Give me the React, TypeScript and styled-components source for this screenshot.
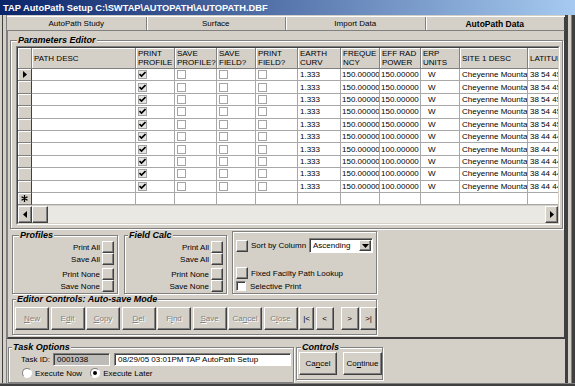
import styled, { createGlobalStyle, css } from "styled-components";

const FACE = "#d4d0c8";
const SHADOW = "#808080";
const DARK = "#404040";
const GRIDLINE = "#a8a8a8";

const COLS = "14px 104px 39px 42px 39px 42px 43px 39px 41px 39px 68px 60px";

const GlobalStyle = createGlobalStyle`
  * { box-sizing: border-box; }
  html, body { margin: 0; padding: 0; background: ${FACE}; }
  body {
    font-family: "Liberation Sans", Arial, sans-serif;
    font-size: 8px;
    color: #000;
  }
  button { font: inherit; color: inherit; }
`;

const raised = css`
  background: ${FACE};
  border: 1px solid;
  border-color: #fff ${DARK} ${DARK} #fff;
  box-shadow: inset -1px -1px ${SHADOW};
`;

const sunken = css`
  border: 1px solid;
  border-color: ${SHADOW} #fff #fff ${SHADOW};
  box-shadow: inset 1px 1px ${DARK};
`;

const Window = styled.div`
  width: 575px;
  height: 386px;
  display: flex;
  flex-direction: column;
  background: ${FACE};
  overflow: hidden;
`;

const TitleBar = styled.div`
  flex: none;
  height: 15px;
  display: flex;
  align-items: center;
  padding-left: 3px;
  background: linear-gradient(to right, #0a246a, #a6caf0);
  color: #fff;
  font-weight: bold;
  font-size: 9.3px;
  white-space: nowrap;
`;

const Frame = styled.div`
  flex: 1;
  display: flex;
  min-height: 0;
`;

const SideEdge = styled.div<{ $side: "left" | "right" }>`
  flex: none;
  width: ${(p) => (p.$side === "left" ? 7 : 10)}px;
  background: ${(p) =>
    p.$side === "left"
      ? `linear-gradient(to right, ${FACE} 0 2px, ${DARK} 2px 3px, ${FACE} 3px 6px, ${SHADOW} 6px 7px)`
      : `linear-gradient(to right, ${DARK} 0 3px, ${FACE} 3px 6px, ${SHADOW} 6px 7px, ${DARK} 7px 10px)`};
`;

const BottomEdge = styled.div`
  flex: none;
  height: 3px;
  background: linear-gradient(to bottom, ${SHADOW} 0 1px, ${DARK} 1px 3px);
`;

const Client = styled.div`
  flex: 1;
  min-width: 0;
  display: flex;
  flex-direction: column;
`;

const TabStrip = styled.div`
  flex: none;
  height: 14px;
  margin-top: 1px;
  display: flex;
  border-top: 1px solid #fff;
`;

const Tab = styled.div<{ $active?: boolean }>`
  flex: 1;
  display: flex;
  align-items: center;
  justify-content: center;
  font-size: ${(p) => (p.$active ? "8.5px" : "8px")};
  font-weight: ${(p) => (p.$active ? "bold" : "normal")};
  border-right: 1px solid ${(p) => (p.$active ? DARK : SHADOW)};
  box-shadow: ${(p) => (p.$active ? "inset 1px 0 #fff" : "1px 0 #fff")};
`;

const TabPage = styled.div`
  flex: none;
  height: 309px;
  display: flex;
  flex-direction: column;
  border-top: 1px solid ${SHADOW};
  border-left: 1px solid ${SHADOW};
  border-right: 1px solid ${DARK};
  border-bottom: 2px solid ${DARK};
  padding-top: 5px;
`;

const Group = styled.fieldset`
  margin: 0;
  min-width: 0;
  border: 1px solid ${SHADOW};
  box-shadow: inset 1px 1px #fff, 1px 1px #fff;
`;

const Caption = styled.legend<{ $indent?: number }>`
  padding: 0 1px;
  margin-left: ${(p) => p.$indent ?? 0}px;
  height: 9px;
  font-size: 9px;
  line-height: 9px;
  font-weight: bold;
  font-style: italic;
  background: ${FACE};
  white-space: nowrap;
`;

const ParamGroup = styled(Group)`
  margin: 0 1px 0 2px;
  padding: 0 2px 3px 5px;
`;

const GridBox = styled.div`
  margin-top: 1px;
  height: 179px;
  display: flex;
  border: 1px solid;
  border-color: ${SHADOW} #fff #fff ${SHADOW};
`;

const GridInner = styled.div`
  flex: 1;
  min-width: 0;
  display: flex;
  flex-direction: column;
  overflow: hidden;
  border: 1px solid;
  border-color: ${DARK} ${FACE} ${FACE} ${DARK};
  background: ${FACE};
`;

const GridRow = styled.div<{ $h: number }>`
  flex: none;
  display: grid;
  grid-template-columns: ${COLS};
  height: ${(p) => p.$h}px;
`;

const HeadCell = styled.div`
  display: flex;
  align-items: center;
  padding: 0 2px;
  background: ${FACE};
  border-right: 1px solid ${SHADOW};
  border-bottom: 1px solid ${SHADOW};
  box-shadow: inset 1px 1px #fff;
  white-space: pre;
  line-height: 9px;
  overflow: hidden;
`;

const RowHead = styled.div`
  display: flex;
  align-items: center;
  justify-content: center;
  background: ${FACE};
  border-right: 1px solid ${DARK};
  border-bottom: 1px solid ${SHADOW};
  box-shadow: inset 1px 1px #fff;
`;

const Cell = styled.div<{ $indent?: number }>`
  display: flex;
  align-items: center;
  padding-left: ${(p) => p.$indent ?? 2}px;
  background: #fff;
  border-right: 1px solid ${GRIDLINE};
  border-bottom: 1px solid ${GRIDLINE};
  white-space: nowrap;
  overflow: hidden;
`;

const CheckBox = styled.span<{ $on?: boolean }>`
  width: 9px;
  height: 9px;
  display: flex;
  align-items: center;
  justify-content: center;
  border: 1px solid #a4a4a4;
  background: ${(p) => (p.$on ? "#e6e4e0" : "#fff")};
`;

const HScroll = styled.div`
  flex: none;
  height: 17px;
  margin-top: auto;
  display: flex;
  background: #eae8e3;
`;

const ScrollPart = styled.div<{ $w: number }>`
  ${raised};
  flex: none;
  width: ${(p) => p.$w}px;
  display: flex;
  align-items: center;
  justify-content: center;
`;

const Track = styled.div`
  flex: 1;
`;

const MidRow = styled.div`
  flex: none;
  display: flex;
  margin: 2px 0 0 4px;
`;

const CmdGroup = styled(Group)<{ $w: number }>`
  width: ${(p) => p.$w}px;
  height: 63px;
  margin-right: ${(p) => (p.$w > 104 ? 6 : 5)}px;
  padding: 0 3px 1px;
`;

const CmdStack = styled.div`
  margin-top: 1px;
  display: flex;
  flex-direction: column;
  align-items: flex-end;
`;

const CmdPair = styled.div`
  display: flex;
  flex-direction: column;
  align-items: flex-end;
  & + & {
    margin-top: 3px;
  }
`;

const CmdRow = styled.div`
  height: 12px;
  display: flex;
  align-items: center;
  gap: 2px;
  white-space: nowrap;
`;

const SquareBtn = styled.button`
  ${raised};
  flex: none;
  width: 12px;
  height: 12px;
  padding: 0;
`;

const OptionsBox = styled.div`
  width: 145px;
  height: 63px;
  display: flex;
  flex-direction: column;
  padding: 6px 3px 2px 3px;
  border: 1px solid ${SHADOW};
  box-shadow: inset 1px 1px #fff, 1px 1px #fff;
`;

const OptRow = styled.div<{ $h: number; $top?: number }>`
  height: ${(p) => p.$h}px;
  margin-top: ${(p) => p.$top ?? 0}px;
  display: flex;
  align-items: center;
  white-space: nowrap;
`;

const OptLabel = styled.span<{ $gap?: number }>`
  margin-left: ${(p) => p.$gap ?? 3}px;
`;

const Select = styled.div`
  ${sunken};
  margin-left: auto;
  width: 64px;
  height: 15px;
  display: flex;
  align-items: center;
  padding-left: 3px;
  background: #fff;
`;

const DropBtn = styled.div`
  ${raised};
  margin-left: auto;
  margin-right: 1px;
  width: 12px;
  height: 11px;
  display: flex;
  align-items: center;
  justify-content: center;
`;

const TickBox = styled.span`
  ${sunken};
  flex: none;
  width: 10px;
  height: 10px;
  background: #fff;
`;

const EditorGroup = styled(Group)`
  width: 365px;
  margin: 1px 0 0 4px;
  padding: 0 0 4px 1px;
`;

const ButtonBar = styled.div`
  margin-top: 3px;
  padding-left: 1px;
  display: flex;
  gap: 1.5px;
`;

const EdButton = styled.button<{ $w?: number; $off?: boolean; $gap?: number }>`
  ${raised};
  flex: none;
  width: ${(p) => p.$w ?? 34}px;
  height: 23px;
  padding: 0;
  margin-left: ${(p) => p.$gap ?? 0}px;
  color: ${(p) => (p.$off ? SHADOW : "#000")};
  text-shadow: ${(p) => (p.$off ? "1px 1px #fff" : "none")};
  font-size: 8px;
`;

const BottomArea = styled.div`
  flex: 1;
  display: flex;
  align-items: flex-start;
  gap: 2px;
  padding-left: 1px;
`;

const TaskGroup = styled(Group)`
  width: 286px;
  margin-top: 4px;
  padding: 0 2px 4px 3px;
`;

const TaskRow = styled.div`
  height: 13px;
  margin-top: 1px;
  padding-left: 9px;
  display: flex;
  align-items: center;
`;

const FieldLabel = styled.span`
  width: 32px;
  flex: none;
  white-space: nowrap;
`;

const TextField = styled.div<{ $grey?: boolean }>`
  ${sunken};
  height: 13px;
  display: flex;
  align-items: center;
  padding-left: 3px;
  white-space: nowrap;
  overflow: hidden;
  background: ${(p) => (p.$grey ? "#bdbcb8" : "#fff")};
  width: ${(p) => (p.$grey ? "57px" : "auto")};
  flex: ${(p) => (p.$grey ? "none" : "1")};
  margin-left: ${(p) => (p.$grey ? 0 : 4)}px;
`;

const RadioRow = styled.div`
  height: 10px;
  margin-top: 2px;
  padding-left: 10px;
  display: flex;
  align-items: center;
`;

const RadioItem = styled.label`
  display: flex;
  align-items: center;
  gap: 3px;
  white-space: nowrap;
  & + & {
    margin-left: 8px;
  }
`;

const RadioDot = styled.span<{ $on?: boolean }>`
  width: 10px;
  height: 10px;
  flex: none;
  border-radius: 50%;
  border: 1px solid;
  border-color: ${SHADOW} #fff #fff ${SHADOW};
  background: #fff;
  display: flex;
  align-items: center;
  justify-content: center;
  &::after {
    content: "";
    width: 4px;
    height: 4px;
    border-radius: 50%;
    background: ${(p) => (p.$on ? "#000" : "transparent")};
  }
`;

const ControlsGroup = styled(Group)`
  width: 87px;
  margin-top: 4px;
  padding: 0 2px 4px 2px;
`;

const ControlBar = styled.div`
  display: flex;
  gap: 6px;
`;

const headers = [
  "PATH DESC",
  "PRINT\nPROFILE",
  "SAVE\nPROFILE?",
  "SAVE\nFIELD?",
  "PRINT\nFIELD?",
  "EARTH\nCURV",
  "FREQUE\nNCY",
  "EFF RAD\nPOWER",
  "ERP\nUNITS",
  "SITE 1 DESC",
  "LATITUDE",
];

const rows = Array.from({ length: 10 }, (_, i) => ({
  power: i < 5 ? "150.00000" : "100.00000",
  lat: i < 5 ? "38 54 45" : "38 44 44",
}));

const Tick = () => (
  <svg width="7" height="7" viewBox="0 0 7 7">
    <path d="M0.5 3 L2.5 5 L6.5 1" stroke="#000" strokeWidth="1.6" fill="none" />
  </svg>
);

const Arrow = ({ dir }: { dir: "left" | "right" | "down" }) => {
  const pts = dir === "left" ? "4,0 4,7 0,3.5" : dir === "right" ? "0,0 0,7 4,3.5" : "0,0 7,0 3.5,4";
  const w = dir === "down" ? 7 : 4;
  const h = dir === "down" ? 4 : 7;
  return (
    <svg width={w} height={h} viewBox={`0 0 ${w} ${h}`}>
      <polygon points={pts} fill="#000" />
    </svg>
  );
};

const NewRowMark = () => (
  <svg width="7" height="7" viewBox="0 0 7 7">
    <path d="M3.5 0 V7 M0.5 1.8 L6.5 5.2 M0.5 5.2 L6.5 1.8" stroke="#000" strokeWidth="1.3" />
  </svg>
);

const CmdButtons = ({ pairs }: { pairs: string[][] }) => (
  <CmdStack>
    {pairs.map((pair) => (
      <CmdPair key={pair[0]}>
        {pair.map((label) => (
          <CmdRow key={label}>
            {label}
            <SquareBtn />
          </CmdRow>
        ))}
      </CmdPair>
    ))}
  </CmdStack>
);

const cmdPairs = [
  ["Print All", "Save All"],
  ["Print None", "Save None"],
];

export default function App() {
  return (
    <Window>
      <GlobalStyle />
      <TitleBar>{"TAP AutoPath Setup C:\\SWTAP\\AUTOPATH\\AUTOPATH.DBF"}</TitleBar>
      <Frame>
        <SideEdge $side="left" />
        <Client>
          <TabStrip>
            <Tab>AutoPath Study</Tab>
            <Tab>Surface</Tab>
            <Tab>Import Data</Tab>
            <Tab $active>AutoPath Data</Tab>
          </TabStrip>
          <TabPage>
            <ParamGroup>
              <Caption $indent={1}>Parameters Editor</Caption>
              <GridBox>
                <GridInner>
                  <GridRow $h={21}>
                    <HeadCell />
                    {headers.map((h) => (
                      <HeadCell key={h}>{h}</HeadCell>
                    ))}
                  </GridRow>
                  {rows.map((r, i) => (
                    <GridRow $h={12.4} key={i}>
                      <RowHead>{i === 0 && <Arrow dir="right" />}</RowHead>
                      <Cell />
                      <Cell>
                        <CheckBox $on>
                          <Tick />
                        </CheckBox>
                      </Cell>
                      <Cell>
                        <CheckBox />
                      </Cell>
                      <Cell>
                        <CheckBox />
                      </Cell>
                      <Cell>
                        <CheckBox />
                      </Cell>
                      <Cell>1.333</Cell>
                      <Cell $indent={1}>150.00000</Cell>
                      <Cell $indent={1}>{r.power}</Cell>
                      <Cell $indent={7}>W</Cell>
                      <Cell>Cheyenne Mountain</Cell>
                      <Cell>{r.lat}</Cell>
                    </GridRow>
                  ))}
                  <GridRow $h={12.4}>
                    <RowHead>
                      <NewRowMark />
                    </RowHead>
                    {headers.map((h) => (
                      <Cell key={h} />
                    ))}
                  </GridRow>
                  <HScroll>
                    <ScrollPart $w={14}>
                      <Arrow dir="left" />
                    </ScrollPart>
                    <ScrollPart $w={16} />
                    <Track />
                    <ScrollPart $w={13}>
                      <Arrow dir="right" />
                    </ScrollPart>
                  </HScroll>
                </GridInner>
              </GridBox>
            </ParamGroup>

            <MidRow>
              <CmdGroup $w={106}>
                <Caption $indent={3}>Profiles</Caption>
                <CmdButtons pairs={cmdPairs} />
              </CmdGroup>
              <CmdGroup $w={103}>
                <Caption>Field Calc</Caption>
                <CmdButtons pairs={cmdPairs} />
              </CmdGroup>
              <OptionsBox>
                <OptRow $h={15}>
                  <SquareBtn />
                  <OptLabel>Sort by Column</OptLabel>
                  <Select>
                    Ascending
                    <DropBtn>
                      <Arrow dir="down" />
                    </DropBtn>
                  </Select>
                </OptRow>
                <OptRow $h={12} $top={14}>
                  <SquareBtn />
                  <OptLabel>Fixed Facilty Path Lookup</OptLabel>
                </OptRow>
                <OptRow $h={10} $top={2}>
                  <TickBox />
                  <OptLabel $gap={4}>Selective Print</OptLabel>
                </OptRow>
              </OptionsBox>
            </MidRow>

            <EditorGroup>
              <Caption $indent={2}>Editor Controls: Auto-save Mode</Caption>
              <ButtonBar>
                <EdButton $off>
                  <u>N</u>ew
                </EdButton>
                <EdButton $off>
                  E<u>d</u>it
                </EdButton>
                <EdButton $off>
                  <u>C</u>opy
                </EdButton>
                <EdButton $off>
                  <u>D</u>el
                </EdButton>
                <EdButton $off>
                  F<u>i</u>nd
                </EdButton>
                <EdButton $off>
                  <u>S</u>ave
                </EdButton>
                <EdButton $off>
                  Ca<u>n</u>cel
                </EdButton>
                <EdButton $off>
                  C<u>l</u>ose
                </EdButton>
                <EdButton $w={15}>|&lt;</EdButton>
                <EdButton $w={18}>&lt;</EdButton>
                <EdButton $w={18} $gap={5.5}>
                  &gt;
                </EdButton>
                <EdButton $w={17}>&gt;|</EdButton>
              </ButtonBar>
            </EditorGroup>
          </TabPage>

          <BottomArea>
            <TaskGroup>
              <Caption>Task Options</Caption>
              <TaskRow>
                <FieldLabel>Task ID:</FieldLabel>
                <TextField $grey>0001038</TextField>
                <TextField>08/29/05 03:01PM TAP AutoPath Setup</TextField>
              </TaskRow>
              <RadioRow>
                <RadioItem>
                  <RadioDot />
                  Execute Now
                </RadioItem>
                <RadioItem>
                  <RadioDot $on />
                  Execute Later
                </RadioItem>
              </RadioRow>
            </TaskGroup>
            <ControlsGroup>
              <Caption $indent={2}>Controls</Caption>
              <ControlBar>
                <EdButton $w={38}>
                  Ca<u>n</u>cel
                </EdButton>
                <EdButton $w={39}>
                  Co<u>n</u>tinue
                </EdButton>
              </ControlBar>
            </ControlsGroup>
          </BottomArea>
        </Client>
        <SideEdge $side="right" />
      </Frame>
      <BottomEdge />
    </Window>
  );
}
